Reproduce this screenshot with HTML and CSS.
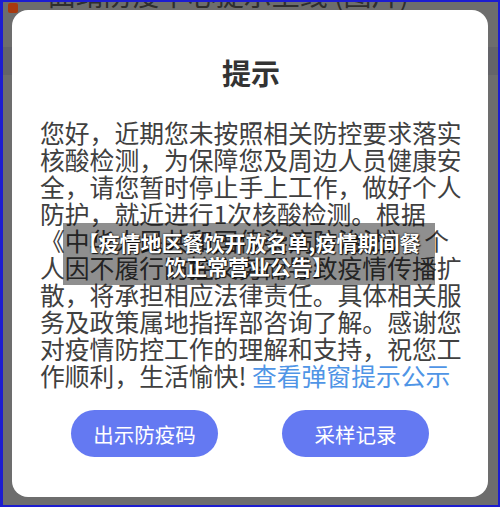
FILE: index.html
```html
<!DOCTYPE html>
<html lang="zh-CN">
<head>
    <meta charset="UTF-8">
    <meta name="viewport" content="width=device-width, initial-scale=1.0">
    <title>提示</title>
    <link rel="stylesheet" href="styles.css">
</head>
<body>
    <div class="frame">
        <!-- stranica ispod maske -->
        <div class="page">
            <div class="topbar">
                <span class="dot"></span>
                <span class="dash">-</span>
                <span class="news-title">曲靖防疫中心提示上线 (图片)</span>
            </div>
            <div class="band"></div>
        </div>

        <div class="dialog">
            <h2 class="dialog-title">提示</h2>
            <p class="dialog-text">
                您好，近期您未按照相关防控要求落实<br>
                核酸检测，为保障您及周边人员健康安<br>
                全，请您暂时停止手上工作，做好个人<br>
                防护，就近进行1次核酸检测。根据<br>
                《中华人民共和国传染病防治法》，个<br>
                人因不履行防控义务而导致疫情传播扩<br>
                散，将承担相应法律责任。具体相关服<br>
                务及政策属地指挥部咨询了解。感谢您<br>
                对疫情防控工作的理解和支持，祝您工<br>
                作顺利，生活愉快! <a class="link" href="#">查看弹窗提示公示</a>
            </p>
            <div class="dialog-actions">
                <button class="btn">出示防疫码</button>
                <button class="btn">采样记录</button>
            </div>
        </div>

        <div class="caption">【疫情地区餐饮开放名单,疫情期间餐<br>饮正常营业公告】</div>
    </div>
</body>
</html>
```

FILE: styles.css
```css
* {
    margin: 0;
    padding: 0;
    box-sizing: border-box;
}

body {
    font-family: "Noto Sans CJK SC", "Noto Sans", sans-serif;
    background-color: #6d6d6d;
}

.frame {
    position: fixed;
    top: 0;
    left: 0;
    width: 500px;
    height: 507px;
    border: 2px solid #1c1cd0;
    border-left-width: 3px;
    background-color: #6d6d6d;
    overflow: hidden;
}

/* stranica ispod */
.topbar {
    display: flex;
    align-items: flex-start;
    height: 10px;
    padding-left: 5px;
}

.dot {
    width: 10px;
    height: 10px;
    margin-top: 1px;
    background-color: #a8390f;
    border-radius: 2px;
}

.dash {
    margin-left: 6px;
    margin-top: -24px;
    font-size: 28px;
    line-height: 28px;
    color: #2e2e2e;
}

.news-title {
    margin-left: 14px;
    margin-top: -22px;
    font-size: 28px;
    line-height: 28px;
    color: #2e2e2e;
    white-space: nowrap;
}

.band {
    margin-top: 35px;
    height: 28px;
    background-color: #646469;
}

/* dijalog */
.dialog {
    position: absolute;
    left: 9px;
    top: 8px;
    width: 476px;
    height: 487px;
    background-color: #fff;
    border-radius: 16px;
    padding: 45px 26px 0 28px;
}

.dialog-title {
    text-align: center;
    font-size: 29px;
    line-height: 35px;
    font-weight: 700;
    color: #333;
}

.dialog-text {
    margin-top: 29px;
    font-size: 24.8px;
    line-height: 27px;
    color: #404040;
    white-space: nowrap;
}

.link {
    color: #4f95e6;
    text-decoration: none;
}

.dialog-actions {
    display: flex;
    justify-content: center;
    gap: 64px;
    margin-top: 21px;
    padding-right: 2px;
}

.btn {
    width: 147px;
    height: 47px;
    border: none;
    border-radius: 24px;
    background-color: #6479f2;
    color: #fff;
    font-family: "Noto Sans CJK SC", sans-serif;
    font-size: 20.5px;
}

/* natpis preko slike */
.caption {
    position: absolute;
    left: 60px;
    top: 221px;
    width: 372px;
    height: 62px;
    padding-top: 7px;
    background-color: rgba(0, 0, 0, 0.44);
    color: #fff;
    font-size: 21px;
    line-height: 24px;
    font-weight: 700;
    text-align: center;
    white-space: nowrap;
    text-shadow: 0 0 2px #000, 1px 1px 1px rgba(0, 0, 0, 0.8);
}
```
